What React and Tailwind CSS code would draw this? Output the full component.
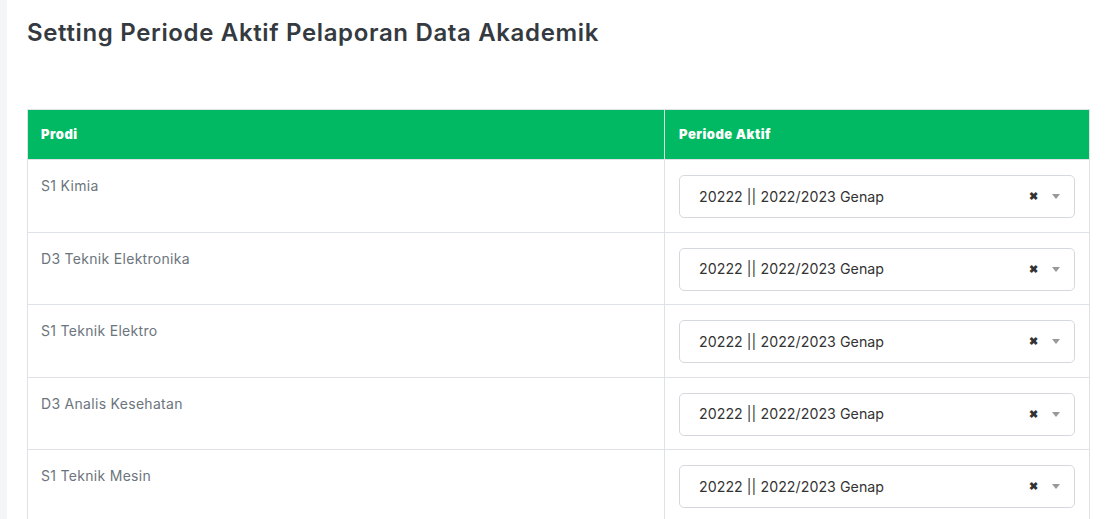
import React from "react";

const rows = [
  "S1 Kimia",
  "D3 Teknik Elektronika",
  "S1 Teknik Elektro",
  "D3 Analis Kesehatan",
  "S1 Teknik Mesin",
];

function Select() {
  return (
    <div className="flex h-[43px] w-[396px] items-center rounded-[5px] border border-[#d5d9de] bg-white pl-[19px] pr-[14px]">
      <span className="flex-1 text-[14.2px] text-[#333] tracking-[0.05px]">20222 || 2022/2023 Genap</span>
      <span className="mr-[14px] text-[11px] font-bold text-[#333]">✖</span>
      <svg width="8" height="5" viewBox="0 0 8 5"><path d="M0 0h8L4 5z" fill="#999" /></svg>
    </div>
  );
}

export default function App() {
  return (
    <div className="flex h-[519px] w-[1107px] overflow-hidden bg-white" style={{ fontFamily: "Inter, 'Noto Sans', sans-serif" }}>
      <div className="w-[7px] shrink-0 bg-[#f4f5f6]" />
      <div className="flex-1 pl-[20px] pr-[17px]">
        <h1 className="mt-[18px] h-[30px] text-[24px] font-semibold leading-[30px] tracking-[0.65px] text-[#343a40]">
          Setting Periode Aktif Pelaporan Data Akademik
        </h1>
        <div className="mt-[61px] border-l border-r border-t border-[#dee2e6]">
          <div className="flex h-[49px] bg-[#00b962] text-[13px] font-black tracking-[0.5px] text-white">
            <div className="flex w-[636px] items-center pl-[13px]">Prodi</div>
            <div className="flex flex-1 items-center border-l border-[#dee2e6] pl-[14px]">Periode Aktif</div>
          </div>
          {rows.map((r) => (
            <div key={r} className="flex h-[72.5px] border-t border-[#dee2e6]">
              <div className="w-[636px] pl-[13px] pt-[15px] text-[14px] tracking-[0.3px] text-[#6c757d]">{r}</div>
              <div className="flex-1 border-l border-[#dee2e6] pl-[14px] pt-[15px]">
                <Select />
              </div>
            </div>
          ))}
        </div>
      </div>
    </div>
  );
}
